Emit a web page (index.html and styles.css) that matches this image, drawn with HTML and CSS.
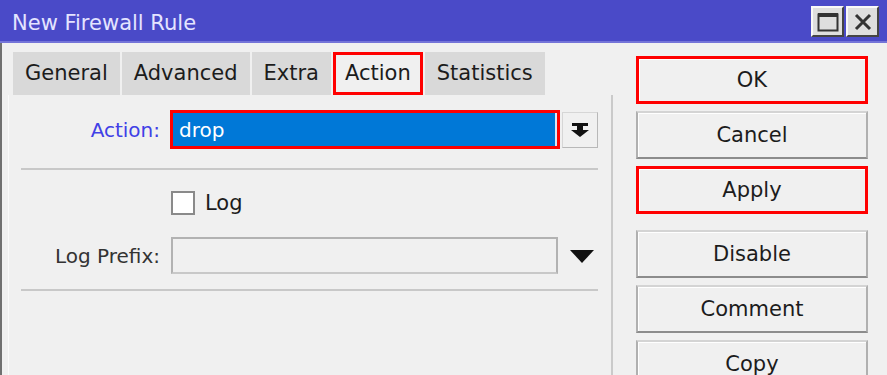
FILE: index.html
```html
<!DOCTYPE html>
<html lang="en">
<head>
    <meta charset="UTF-8">
    <title>New Firewall Rule</title>
    <link rel="stylesheet" href="styles.css">
</head>
<body>

<div class="window">
    <div class="titlebar">
        <span class="title">New Firewall Rule</span>
        <div class="win-buttons">
            <button class="win-btn">
                <svg width="22" height="20" viewBox="0 0 22 20"><rect x="1.5" y="2.5" width="19" height="16" fill="none" stroke="#333" stroke-width="2"/><rect x="1" y="1" width="20" height="4" fill="#333"/></svg>
            </button>
            <button class="win-btn">
                <svg width="20" height="20" viewBox="0 0 20 20"><path d="M3 3 L17 17 M17 3 L3 17" stroke="#333" stroke-width="3"/></svg>
            </button>
        </div>
    </div>

    <div class="body">
        <div class="main">
            <div class="tabs">
                <div class="tab">General</div>
                <div class="tab">Advanced</div>
                <div class="tab">Extra</div>
                <div class="tab active marked">Action</div>
                <div class="tab">Statistics</div>
            </div>

            <div class="panel">
                <div class="row">
                    <label class="label blue">Action:</label>
                    <div class="field selected marked">drop</div>
                    <button class="drop-btn">
                        <svg width="20" height="14" viewBox="0 0 20 14"><rect x="2" y="0" width="16" height="3" fill="#111"/><rect x="7" y="3" width="6" height="4" fill="#111"/><polygon points="1,7 19,7 10,14" fill="#111"/></svg>
                    </button>
                </div>

                <div class="separator"></div>

                <div class="row check-row">
                    <span class="checkbox"></span>
                    <span class="check-label">Log</span>
                </div>

                <div class="row prefix-row">
                    <label class="label">Log Prefix:</label>
                    <div class="field empty"></div>
                    <span class="arrow">
                        <svg width="24" height="14" viewBox="0 0 24 14"><polygon points="0,0 24,0 12,13" fill="#111"/></svg>
                    </span>
                </div>

                <div class="separator"></div>
            </div>
        </div>

        <div class="side">
            <button class="button marked">OK</button>
            <button class="button">Cancel</button>
            <button class="button marked">Apply</button>
            <button class="button group">Disable</button>
            <button class="button">Comment</button>
            <button class="button">Copy</button>
        </div>
    </div>
</div>

</body>
</html>
```

FILE: styles.css
```css
body {
    margin: 0;
    font-family: "DejaVu Sans", sans-serif;
    font-size: 20px;
    color: #1c1c1c;
    background-color: #f0f0f0;
    overflow: hidden;
}

.window {
    display: flex;
    flex-direction: column;
    height: 375px;
}

.titlebar {
    flex-shrink: 0;
    height: 41px;
    background-color: #4a4ac8;
    border-bottom: 2px solid #7474d8;
    display: flex;
    align-items: center;
    justify-content: space-between;
    padding: 0 8px 0 12px;
}

.title {
    color: #e4e4ff;
    font-size: 21px;
    padding-top: 4px;
}

.win-buttons {
    display: flex;
    gap: 2px;
    padding-top: 2px;
}

.win-btn {
    width: 33px;
    height: 31px;
    padding: 0;
    background-color: #dedede;
    border: 2px solid #444;
    border-top-color: #f8f8f8;
    border-left-color: #f8f8f8;
    display: flex;
    align-items: center;
    justify-content: center;
}

.body {
    flex: 1;
    min-height: 0;
    display: flex;
    border-left: 2px solid #707070;
    padding-left: 6px;
}

.main {
    width: 605px;
    display: flex;
    flex-direction: column;
}

.tabs {
    display: flex;
    gap: 2px;
    padding: 9px 0 0 5px;
}

.tab {
    height: 43px;
    line-height: 43px;
    padding: 0 12px;
    font-size: 21px;
    background-color: #d9d9d9;
    box-sizing: border-box;
}

.tab.active {
    background-color: #f0f0f0;
    line-height: 37px;
    padding: 0 9px;
}

.marked {
    border: 3px solid #ff0000 !important;
}

.panel {
    flex: 1;
    border-left: 1px solid #fafafa;
    border-right: 2px solid #cacaca;
    padding-top: 15px;
}

.row {
    display: flex;
    align-items: center;
    height: 39px;
}

.label {
    width: 151px;
    text-align: right;
    margin-right: 10px;
    color: #333;
}

.label.blue {
    color: #4040e6;
}

.field {
    width: 390px;
    height: 39px;
    box-sizing: border-box;
    display: flex;
    align-items: center;
    padding-left: 6px;
}

.field.selected {
    background-color: #0078d7;
    color: #fff;
    box-shadow: inset -2px 0 0 #d8e8f8;
}

.field.empty {
    width: 387px;
    height: 37px;
    margin-left: 1px;
    border: 2px solid #b2b2b2;
    border-bottom-color: #c8c8c8;
}

.drop-btn {
    width: 36px;
    height: 36px;
    margin-left: 2px;
    padding: 0;
    background-color: #f0f0f0;
    border: 1px solid #d6d6d6;
    border-right-color: #b8b8b8;
    border-bottom-color: #b8b8b8;
    display: flex;
    align-items: center;
    justify-content: center;
}

.separator {
    height: 2px;
    background-color: #c8c8c8;
    margin: 19px 13px 0 12px;
}

.check-row {
    height: 24px;
    margin-top: 21px;
    padding-left: 162px;
}

.checkbox {
    width: 20px;
    height: 20px;
    background-color: #fff;
    border: 2px solid #8a8a8a;
}

.check-label {
    margin-left: 10px;
    font-size: 21px;
}

.prefix-row {
    height: 37px;
    margin-top: 22px;
}

.prefix-row + .separator {
    margin-top: 15px;
}

.arrow {
    margin-left: 12px;
    display: flex;
    padding-top: 3px;
}

.side {
    display: flex;
    flex-direction: column;
    gap: 7px;
    margin-left: 23px;
    padding-top: 13px;
}

.button {
    width: 232px;
    height: 48px;
    flex-shrink: 0;
    box-sizing: border-box;
    font-family: "DejaVu Sans", sans-serif;
    font-size: 21px;
    color: #1c1c1c;
    background-color: #f0f0f0;
    border: 2px solid #b0b0b0;
    border-top-color: #d4d4d4;
    border-bottom-color: #8c8c8c;
    box-shadow: inset 1px 1px 0 #fff;
}

.button.group {
    margin-top: 9px;
}
```
